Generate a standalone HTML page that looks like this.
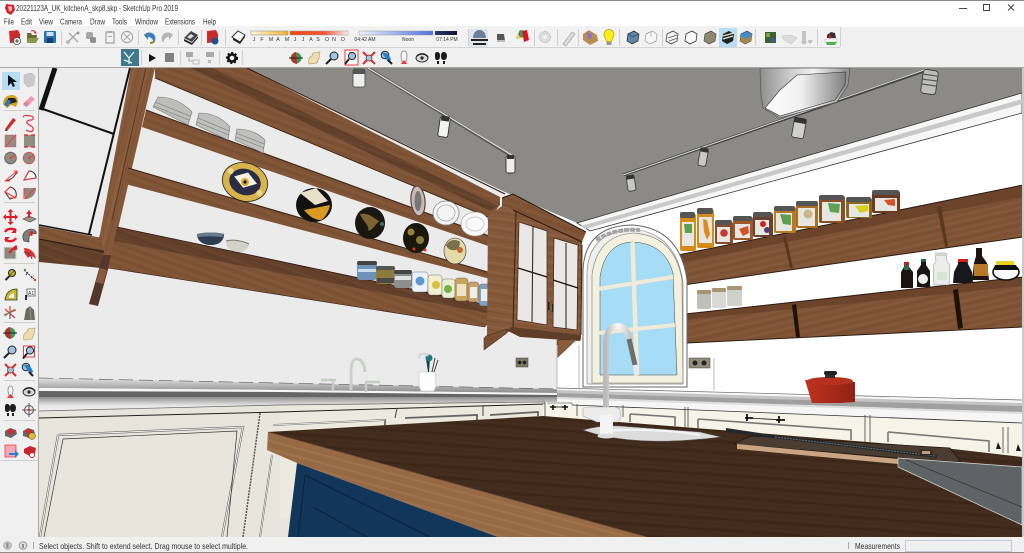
<!DOCTYPE html>
<html><head><meta charset="utf-8"><title>SketchUp</title>
<style>html,body{margin:0;padding:0;background:#f0f0f0;overflow:hidden}svg{display:block}
text{font-family:"Liberation Sans",sans-serif;fill:#333}</style></head>
<body>
<svg xmlns="http://www.w3.org/2000/svg" width="1024" height="553" viewBox="0 0 1024 553">
<defs>
<clipPath id="vp"><rect x="39" y="68" width="983" height="469"/></clipPath>
<pattern id="wl" width="70" height="14" patternUnits="userSpaceOnUse" patternTransform="rotate(20)">
<rect width="70" height="14" fill="#7e5335"/><rect y="2" width="70" height="2" fill="#83583a"/><rect y="6" width="70" height="1" fill="#774d30"/><rect y="9" width="70" height="3" fill="#825739"/><rect y="12" width="70" height="1" fill="#794f32"/></pattern>
<pattern id="wd" width="70" height="10" patternUnits="userSpaceOnUse" patternTransform="rotate(20)">
<rect width="70" height="10" fill="#63402a"/><rect y="3" width="70" height="2" fill="#69452e"/><rect y="7" width="70" height="1" fill="#5c3b26"/></pattern>
<pattern id="wr" width="70" height="13" patternUnits="userSpaceOnUse" patternTransform="rotate(-13)">
<rect width="70" height="13" fill="#7e5335"/><rect y="2" width="70" height="2" fill="#85593b"/><rect y="6" width="70" height="1" fill="#774d31"/><rect y="9" width="70" height="2" fill="#83573a"/></pattern>
<pattern id="wv" width="12" height="60" patternUnits="userSpaceOnUse" patternTransform="rotate(14)">
<rect width="12" height="60" fill="#85583a"/><rect x="2" width="2" height="60" fill="#8e6042"/><rect x="7" width="1" height="60" fill="#7a5034"/></pattern>
<pattern id="wc" width="60" height="9" patternUnits="userSpaceOnUse" patternTransform="rotate(8)">
<rect width="60" height="9" fill="#85583a"/><rect y="2" width="60" height="2" fill="#8d5f41"/><rect y="6" width="60" height="1" fill="#7b5135"/></pattern>
<pattern id="wt" width="90" height="11" patternUnits="userSpaceOnUse" patternTransform="rotate(4)">
<rect width="90" height="11" fill="#402a1c"/><rect y="1" width="90" height="2" fill="#462e1f"/><rect y="5" width="90" height="1" fill="#382415"/><rect y="8" width="90" height="2" fill="#452d1e"/></pattern>
<pattern id="wi" width="60" height="8" patternUnits="userSpaceOnUse" patternTransform="rotate(15)">
<rect width="60" height="8" fill="#976a46"/><rect y="3" width="60" height="2" fill="#9f714c"/></pattern>
<linearGradient id="hood" x1="0" x2="1" y1="0" y2="0"><stop offset="0" stop-color="#8e8e8e"/><stop offset=".35" stop-color="#cfcfcf"/><stop offset=".6" stop-color="#f2f2f2"/><stop offset="1" stop-color="#8c8c8c"/></linearGradient>
<linearGradient id="hood2" x1="0" x2="1" y1="0" y2="0"><stop offset="0" stop-color="#fff"/><stop offset=".45" stop-color="#f0f0f0"/><stop offset=".8" stop-color="#a8a8a8"/><stop offset="1" stop-color="#7e7e7e"/></linearGradient>
<linearGradient id="tap" x1="0" x2="1" y1="0" y2="0"><stop offset="0" stop-color="#bbb"/><stop offset=".5" stop-color="#fafafa"/><stop offset="1" stop-color="#c8c8c8"/></linearGradient>
<linearGradient id="potg" x1="0" x2="1" y1="0" y2="0"><stop offset="0" stop-color="#c2321f"/><stop offset="1" stop-color="#8f2214"/></linearGradient>
<linearGradient id="yb" x1="0" x2="1"><stop offset="0" stop-color="#fff6d8"/><stop offset="1" stop-color="#f2b32e"/></linearGradient>
<linearGradient id="rb" x1="0" x2="1"><stop offset="0" stop-color="#f2450d"/><stop offset=".6" stop-color="#f4553a"/><stop offset="1" stop-color="#fff0f0"/></linearGradient>
<linearGradient id="bb" x1="0" x2="1"><stop offset="0" stop-color="#eef2fb"/><stop offset="1" stop-color="#4f6fe0"/></linearGradient>
<linearGradient id="nb" x1="0" x2="1"><stop offset="0" stop-color="#2a3a78"/><stop offset="1" stop-color="#101428"/></linearGradient>
<linearGradient id="m1" x1="0" x2="0" y1="0" y2="1"><stop offset="0" stop-color="#e2e2e2"/><stop offset="1" stop-color="#8a8a8a"/></linearGradient>
<linearGradient id="m2" x1="0" x2="0" y1="0" y2="1"><stop offset="0" stop-color="#8e8e8e"/><stop offset=".6" stop-color="#e6e6e6"/><stop offset="1" stop-color="#f0f0f0"/></linearGradient>
</defs>

<!-- chrome -->
<rect width="1024" height="553" fill="#f0f0f0"/>
<rect width="1024" height="27" fill="#fff"/>
<rect width="1024" height="1" fill="#8c8c8c"/>
<rect y="26" width="840" height="21" fill="#f2f2f2"/>
<rect y="47" width="840" height="1" fill="#d4d4d4"/>
<rect y="67" width="1024" height="1" fill="#a9a9a9"/>

<!-- title -->
<path d="M6 4l8 1 1 5-4 5-4-2-2-5z" fill="#d8232a"/><path d="M8 6l4 .5v4l-3 1z" fill="#f7b5b5"/>
<text x="16" y="11" font-size="8.6" textLength="162" lengthAdjust="spacingAndGlyphs">20221123A_UK_kitchenA_skp8.skp - SketchUp Pro 2019</text>
<g font-size="8.4">
<text x="4" y="24.5" textLength="10" lengthAdjust="spacingAndGlyphs">File</text>
<text x="21" y="24.5" textLength="11" lengthAdjust="spacingAndGlyphs">Edit</text>
<text x="39" y="24.5" textLength="14" lengthAdjust="spacingAndGlyphs">View</text>
<text x="60" y="24.5" textLength="22" lengthAdjust="spacingAndGlyphs">Camera</text>
<text x="90" y="24.5" textLength="15" lengthAdjust="spacingAndGlyphs">Draw</text>
<text x="112" y="24.5" textLength="15" lengthAdjust="spacingAndGlyphs">Tools</text>
<text x="135" y="24.5" textLength="23" lengthAdjust="spacingAndGlyphs">Window</text>
<text x="165" y="24.5" textLength="30" lengthAdjust="spacingAndGlyphs">Extensions</text>
<text x="203" y="24.5" textLength="13" lengthAdjust="spacingAndGlyphs">Help</text>
</g>
<!-- window controls -->
<rect x="959" y="8" width="8" height="1" fill="#444"/>
<rect x="983.5" y="4.5" width="6" height="6" fill="none" stroke="#444"/>
<path d="M1008 4.5l6 6m0-6l-6 6" stroke="#444" fill="none"/>

<!-- dividers -->
<g fill="#cfcfcf">
<rect x="61" y="30" width="1" height="15"/><rect x="138" y="30" width="1" height="15"/><rect x="178" y="30" width="1" height="15"/><rect x="201" y="30" width="1" height="15"/><rect x="225" y="29" width="1" height="17"/><rect x="468" y="29" width="1" height="17"/><rect x="534" y="29" width="1" height="17"/><rect x="557" y="29" width="1" height="17"/><rect x="578" y="29" width="1" height="17"/><rect x="619" y="29" width="1" height="17"/><rect x="662" y="29" width="1" height="17"/><rect x="755" y="29" width="1" height="17"/><rect x="817" y="29" width="1" height="17"/><rect x="840" y="27" width="1" height="20"/>
<rect x="141" y="50" width="1" height="15"/><rect x="180" y="50" width="1" height="15"/><rect x="219" y="50" width="1" height="15"/><rect x="242" y="50" width="1" height="15"/>
<rect x="4" y="110" width="31" height="1"/><rect x="4" y="202" width="31" height="1"/><rect x="4" y="263" width="31" height="1"/><rect x="4" y="322" width="31" height="1"/><rect x="4" y="380" width="31" height="1"/><rect x="4" y="420" width="31" height="1"/><rect x="0" y="460" width="38" height="1"/>
</g>

<!-- row 1 icons -->
<path d="M9 31l9-1 2 4v8l-10 1z" fill="#d12a2a"/><circle cx="17" cy="41" r="3.6" fill="#fff" stroke="#333" stroke-width=".7"/><path d="M15 41h4m-2-2v4" stroke="#222" stroke-width=".8"/>
<path d="M27 33h4l1 2h5l-1 8H27z" fill="#6d6a35"/><path d="M28 38h11l-3 5H27z" fill="#8b9a4d"/><path d="M31 31c2-1 4 0 5 2l-2-.2" stroke="#c23" fill="none"/>
<rect x="44" y="31" width="12" height="12" rx="1" fill="#2b6fb0"/><rect x="46.5" y="32" width="7" height="4" fill="#cfe3f4"/><rect x="47" y="38" width="6" height="5" fill="#123f6f"/>
<path d="M68 42l9-9m-8 0l9 9" stroke="#aaa" stroke-width="1.4"/><circle cx="68" cy="42" r="2" fill="#bbb"/><circle cx="78" cy="33" r="1.5" fill="#999"/>
<rect x="86" y="32" width="7" height="7" rx="2" fill="#a8a8a8"/><rect x="90" y="37" width="6" height="6" rx="2" fill="#8f8f8f"/>
<rect x="106" y="32" width="8" height="11" fill="none" stroke="#aaa" stroke-width="1.4"/><rect x="108" y="31" width="4" height="2" fill="#aaa"/><rect x="108" y="36" width="4" height="1" fill="#aaa"/>
<circle cx="127" cy="37" r="5.6" fill="#f4f4f4" stroke="#aaa" stroke-width="1.2"/><path d="M124 34l6 6m0-6l-6 6" stroke="#aaa"/>
<path d="M144 35c3-4 9-3 11 1 1 3 0 5-1 7-1-4-3-6-6-6l0 3z" fill="#3e7fb5"/><path d="M150 43c2 0 4-1 4-2" stroke="#8a8840" stroke-width="2" fill="none"/>
<path d="M173 35c-3-4-9-3-11 1-1 3 0 5 1 7 1-4 3-6 6-6l0 3z" fill="#b5b5b5"/>
<path d="M184 38l7-7 7 4-6 7z" fill="#444"/><path d="M184 39l8 4 6-7v2l-6 7-8-4z" fill="#222"/><path d="M187 37l4-3 3 2-4 3z" fill="#ddd"/>
<path d="M207 31l9-1 2 4v8l-11 1z" fill="#c92a2a"/><circle cx="215" cy="41" r="3.5" fill="#1d4f91"/>
<path d="M232 37l6-6 7 4-5 7z" fill="#fff" stroke="#333"/><path d="M233 38l7 4 5-7v2l-5 7-7-4z" fill="#222"/>

<!-- shadow sliders -->
<rect x="251" y="31" width="37" height="4" fill="url(#yb)" stroke="#888" stroke-width=".5"/>
<rect x="290" y="31" width="58" height="4" fill="url(#rb)" stroke="#999" stroke-width=".5"/>
<rect x="359" y="31" width="74" height="4" fill="url(#bb)" stroke="#999" stroke-width=".5"/>
<rect x="435" y="31" width="22" height="4" fill="url(#nb)"/>
<g font-size="5.2" fill="#444" text-anchor="middle">
<text x="254" y="41">J</text><text x="262" y="41">F</text><text x="271" y="41">M</text><text x="278" y="41">A</text><text x="287" y="41">M</text><text x="295" y="41">J</text><text x="303" y="41">J</text><text x="311" y="41">A</text><text x="318" y="41">S</text><text x="327" y="41">O</text><text x="334" y="41">N</text><text x="343" y="41">D</text>
<text x="365" y="41" font-size="5">04:42 AM</text><text x="408" y="41" font-size="5">Noon</text><text x="447" y="41" font-size="5">07:14 PM</text>
</g>
<!-- right part row 1 -->
<rect x="469" y="29" width="19" height="18" fill="#e0e5ec"/>
<path d="M473 38c0-5 3-8 6.500-8s6.500 3 6.500 8z" fill="#6d7d9a"/><rect x="471" y="39" width="17" height="2" fill="#222"/><rect x="473" y="43" width="13" height="2" fill="#222"/>
<path d="M497 34h7l1 7h-8z" fill="#555"/><rect x="497" y="40" width="8" height="2" fill="#bbb"/>
<path d="M517 37l3-7 2 1-2 7z" fill="#34b"/><path d="M519 31l4-1 1 7-3 1z" fill="#3a4"/><path d="M522 31l5-1 2 10-5 2z" fill="#e0101f"/><path d="M516 39l2-6 3 5z" fill="#e9c14a"/>
<circle cx="545" cy="37" r="5.5" fill="#ddd" stroke="#bbb" stroke-dasharray="1.500 1"/><circle cx="545" cy="37" r="2" fill="#f3f3f3"/>
<path d="M563 44l9-12 3 2-9 12z" fill="#ddd" stroke="#aaa" stroke-width=".8"/>
<path d="M583 34l6-4 3 2 5 3 1 6-8 4-7-5z" fill="#b98c52"/><path d="M587 33l4 0 1 5-4 1z" fill="#8d6fc4"/>
<path d="M609 29.500c3 0 5 2 5 5 0 3-2 4-2.500 7h-5c-.5-3-2.500-4-2.500-7 0-3 2-5 5-5z" fill="#fbee1d" stroke="#b3a10f" stroke-width=".7"/><rect x="606.500" y="42" width="5" height="3" fill="#999"/>
<path d="M628 34l6-3 5 3-1 7-6 3-5-3z" fill="#5d88a8" stroke="#222" stroke-width=".7"/><path d="M628 34l5 3 5-3" fill="none" stroke="#234" stroke-width=".6"/>
<path d="M646 34l6-3 5 3-1 7-6 3-5-3z" fill="#f6f6f6" stroke="#999" stroke-width=".7"/><path d="M651 31v6" stroke="#bbb"/>
<path d="M667 34l6-3 5 3-1 7-6 3-5-3z" fill="#f2f2f2" stroke="#444" stroke-width=".8"/><path d="M668 38l9-3m-8 6l9-3" stroke="#555" stroke-width=".7"/>
<path d="M686 34l6-3 5 3-1 7-6 3-5-3z" fill="#fafafa" stroke="#333" stroke-width=".8"/>
<path d="M705 34l6-3 5 3-1 7-6 3-5-3z" fill="#8e8a72" stroke="#444" stroke-width=".7"/>
<rect x="719" y="28" width="18" height="19" fill="#b9dcf5"/><path d="M723 34l6-3 5 3-1 7-6 3-5-3z" fill="#222"/><path d="M723 36l11-3m-11 6l10-3" stroke="#e6e2c9" stroke-width="1.3"/>
<path d="M741 34l6-3 5 3-1 7-6 3-5-3z" fill="#3f8fd0" stroke="#333" stroke-width=".6"/><path d="M741 36l6 3 5-5-1 7-6 3-5-3z" fill="#a8864f"/>
<rect x="765" y="32" width="11" height="11" fill="#3f5f30"/><rect x="766" y="33" width="4" height="4" fill="#7d9e4a"/><rect x="771" y="38" width="4" height="4" fill="#2a64a0"/>
<path d="M782 36l9-1 6 3-6 6-7-4z" fill="#ddd" stroke="#c6c6c6" stroke-width=".6"/>
<path d="M802 31h4v9h-4zM808 34v6h5l-2.500 4-2.500-2z" fill="#c4c4c4"/><circle cx="804" cy="42" r="2.500" fill="#c4c4c4"/>
<path d="M827 35l4-3 4 1 1 5-9 0z" fill="#333"/><path d="M825 39h12v3h-12z" fill="#fff" stroke="#aaa" stroke-width=".5"/><path d="M826 42h11l-2 3h-8z" fill="#4caf50"/><circle cx="830" cy="37" r="1.500" fill="#c22"/>

<!-- row 2 icons -->
<rect x="121" y="49" width="18" height="17" fill="#3e7a8c"/><path d="M124 52l5 6 5-6M129 58v6M124 60l8 3" stroke="#e8eef0" stroke-width="1.300" fill="none"/>
<path d="M149 54l7 4-7 4z" fill="#111"/>
<rect x="165" y="53" width="9" height="9" fill="#808080"/>
<rect x="186" y="52" width="7" height="5" fill="#aaa"/><rect x="193" y="60" width="6" height="4" fill="none" stroke="#bbb"/><path d="M189 57v4h4" stroke="#aaa" fill="none"/>
<rect x="206" y="52" width="8" height="5" fill="#aaa"/><path d="M208 60l3 3m0-3l-3 3" stroke="#aaa"/>
<circle cx="232" cy="58" r="3.600" fill="none" stroke="#111" stroke-width="2.600"/><circle cx="232" cy="58" r="5.300" fill="none" stroke="#111" stroke-width="1.600" stroke-dasharray="2 2"/>

<g>
<circle cx="296" cy="58" r="5.500" fill="#3d9b58"/><path d="M291 58c2-4 3-6 5-6l1 12c-3 0-5-3-6-6z" fill="#c62828"/><path d="M289 58h14" stroke="#222"/>
<path d="M309 64c-1-4 0-7 3-8l1-3 7-1-1 6-2 5z" fill="#efdcb0" stroke="#b9a678" stroke-width=".7"/>
<circle cx="334" cy="56" r="4" fill="#a4c3de" stroke="#222"/><path d="M331 59l-5 5" stroke="#222" stroke-width="2"/>
<rect x="345" y="50" width="13" height="15" fill="#fff" stroke="#ea3a3a"/><circle cx="352" cy="56" r="3.600" fill="#a4c3de" stroke="#222"/><path d="M349 59l-4 5" stroke="#222" stroke-width="2"/>
<circle cx="369" cy="58" r="3" fill="#a4c3de" stroke="#333" stroke-width=".7"/><path d="M363 52l4 4M375 52l-4 4M363 64l4-4M375 64l-4-4" stroke="#dc2b2b" stroke-width="2"/>
<circle cx="385" cy="55" r="3.800" fill="#9dc1de" stroke="#222"/><path d="M382 53c4-1 8 2 9 7l-3 2z" fill="#2b7fc4"/><path d="M388 60l4 4" stroke="#222" stroke-width="2"/>
<path d="M404 51c2 0 3 2 3 5l-1 6h-4l-1-6c0-3 1-5 3-5z" fill="#f6f6f6" stroke="#999"/><path d="M401 64h6l-3-4z" fill="#e33"/>
<ellipse cx="422" cy="58" rx="6" ry="4" fill="#d9d9d9" stroke="#333"/><path d="M417 56c3-3 8-3 11 1" stroke="#222" stroke-width="1.500" fill="none"/><circle cx="422" cy="58" r="1.600" fill="#222"/>
<path d="M437 52c2 0 3 1 3 4s-1 4-3 4-2-2-2-4 0-4 2-4zm0 9h2v3h-2zM444 52c2 0 3 2 3 4s-1 4-3 4-3-1-3-4 1-4 3-4zm-1 9h2v3h-2z" fill="#1d1d1d"/>
</g>

<!-- left toolbar -->
<rect x="2" y="72" width="18" height="18" fill="#b9dcf5"/><path d="M8 75v11l3-3 2 4 2-1-2-4h4z" fill="#111"/>
<path d="M24 75l7-2 4 3-1 9-6 2-4-4z" fill="#c9c9c9" stroke="#bbb" stroke-width=".6"/>
<path d="M3 104c0-6 4-9 9-9 4 0 6 3 6 7l-2 5-5-2-4 3z" fill="#d2a423"/><path d="M8 98l7 0 2 4-8 2z" fill="#222"/><path d="M4 105l3-6 4 2-3 6z" fill="#3a74b0"/>
<path d="M23 104l8-8 4 3-8 8z" fill="#f39ab0"/><path d="M23 104l3 3 3-3-3-3z" fill="#dd7d98"/>
<path d="M5 129l8-11 3 2-9 11z" fill="#c83030"/><path d="M6 129l-1 2 2 0z" fill="#222"/>
<path d="M23 117c2-3 5-1 8-1s3 4 0 4-6 2-3 4 6 3 5 6-5 1-7 0" fill="none" stroke="#e63946" stroke-width="1.300"/>
<rect x="5" y="135" width="11" height="12" fill="#908e83" stroke="#e46" stroke-width=".4"/><path d="M5 147l11-12" stroke="#f33" stroke-width="1"/>
<rect x="24" y="135" width="11" height="12" fill="#908e83"/><path d="M24 135h4M31 135h4M24 147h4M31 147h4" stroke="#e33" stroke-width="1.400"/>
<circle cx="10.500" cy="158" r="5.800" fill="#8f8c80" stroke="#666"/><circle cx="10.500" cy="158" r="1" fill="#e33"/><path d="M11 158l4-3" stroke="#e33"/>
<circle cx="29" cy="158" r="5.800" fill="#8f8c80" stroke="#e33" stroke-width=".7"/><circle cx="29" cy="158" r="1" fill="#e33"/><path d="M29 158l5-3" stroke="#e33"/>
<path d="M5 181c6-1 10-4 12-10" stroke="#333" fill="none"/><path d="M5 181l12-10M5 181h5M14 171h3v3" stroke="#f33" fill="none"/>
<path d="M24 180l5-9c4 0 7 3 7 7z" fill="#f6f6f6" stroke="#333"/><path d="M24 180l5-9M24 180l12-2" stroke="#e33"/>
<path d="M5 192l5-5c5 1 7 5 6 10l-6 2z" fill="none" stroke="#333"/><path d="M5 192l11 6M10 187l-5 5M10 198h5" stroke="#f33" fill="none"/>
<path d="M24 188h12c0 6-4 11-11 11z" fill="#8c8a7f"/><path d="M24 188v11M25 199l10-11" stroke="#f33"/>
<path d="M10.500 211v12M4.500 217h12" stroke="#e11d2a" stroke-width="2"/><path d="M10.500 209l-3 3h6zM10.500 225l-3-3h6zM3 217l3-3v6zM18 217l-3-3v6z" fill="#e11d2a"/>
<path d="M23 219l6-3 7 3-6 3z" fill="#9a9683" stroke="#444" stroke-width=".6"/><path d="M29 218v-4" stroke="#e11d2a" stroke-width="2"/><path d="M26 214l3-4 3 4z" fill="#e11d2a"/>
<path d="M5 232c2-4 9-4 11-1M16 238c-2 4-9 4-11 1" stroke="#e11d2a" stroke-width="2.400" fill="none"/><path d="M16 228v5h-5zM5 242v-5h5z" fill="#e11d2a"/>
<path d="M24 241c-3-6 0-11 7-12 4 0 6 3 5 5-3-1-6 0-7 3l0 5z" fill="#7f7f7f" stroke="#333" stroke-width=".6"/><path d="M30 231l4 1-2 4-3-1z" fill="#d82a2a"/>
<rect x="4" y="247" width="12" height="12" fill="#8c8a7f" stroke="#ddd"/><path d="M9 253l7-7" stroke="#e11d2a" stroke-width="2"/><path d="M17 245v5h-5z" fill="#e11d2a"/>
<path d="M24 248c6 0 11 4 12 11-3-3-6-4-8-1l-3-4z" fill="#e83232"/><path d="M24 252c4 0 7 3 8 7" stroke="#444" fill="none"/>
<circle cx="12" cy="273" r="3.500" fill="#c7b324" stroke="#222"/><path d="M9.500 276l-4 4" stroke="#222" stroke-width="2"/><path d="M5 280l10-10" stroke="#444" stroke-width=".7"/>
<path d="M24 270l10 9M26 275l2-3M31 278l3-2" stroke="#333" stroke-dasharray="2 1"/><circle cx="25" cy="270" r="1.200" fill="#3a3"/><circle cx="35" cy="280" r="1.200" fill="#e33"/>
<path d="M5 300c1-8 6-11 12-11v11z" fill="#c7ba30" stroke="#333" stroke-width=".8"/><path d="M9 298c0-3 2-4 5-5v5z" fill="#f3f3f3"/>
<rect x="27" y="289" width="8" height="7" fill="#fff" stroke="#777"/><text x="28" y="295" font-size="5" fill="#333">A1</text><rect x="25" y="295" width="2" height="5" fill="#333"/>
<path d="M10 306v13M4 315l12-5M5 309l10 9" stroke="#e33" stroke-width="1.200"/><path d="M10 312l5-3M10 312l-5 4" stroke="#3a3"/><path d="M10 312v7" stroke="#36c"/>
<path d="M24 320l2-11 4-3 4 4 1 10z" fill="#6c6c62"/><path d="M30 306l1 14" stroke="#999"/>
<circle cx="10" cy="333" r="5.500" fill="#3d9b58"/><path d="M5 333c1-4 3-6 5-6l1 12c-3 0-5-3-6-6z" fill="#c62828"/><path d="M3 333h14" stroke="#222"/>
<path d="M24 340c-1-4 0-7 3-8l1-3 7-1-1 6-2 5z" fill="#efdcb0" stroke="#b9a678" stroke-width=".7"/>
<circle cx="12" cy="350" r="4" fill="#a4c3de" stroke="#222"/><path d="M9 353l-5 5" stroke="#222" stroke-width="2"/>
<rect x="23.500" y="346" width="11" height="11" fill="#fff" stroke="#ea3a3a"/><circle cx="30" cy="350.500" r="3.600" fill="#a4c3de" stroke="#222"/><path d="M27 353.500l-4 5" stroke="#222" stroke-width="2"/>
<circle cx="10.500" cy="370" r="3" fill="#a4c3de" stroke="#333" stroke-width=".7"/><path d="M5 364l4 4M16 364l-4 4M5 376l4-4M16 376l-4-4" stroke="#dc2b2b" stroke-width="2"/>
<circle cx="26" cy="367" r="3.800" fill="#9dc1de" stroke="#222"/><path d="M24 365c4-1 8 2 9 7l-3 2z" fill="#2b7fc4"/><path d="M29 372l4 4" stroke="#222" stroke-width="2"/>
<path d="M10.500 386c2 0 2.500 2 2.500 5l-1 5h-3l-1-5c0-3 .5-5 2.500-5z" fill="#f6f6f6" stroke="#999"/><path d="M7 398h7l-3.500-4z" fill="#e33"/>
<ellipse cx="29" cy="392" rx="6" ry="4" fill="#d9d9d9" stroke="#333"/><path d="M24 390c3-3 8-3 11 1" stroke="#222" stroke-width="1.500" fill="none"/><circle cx="29" cy="392" r="1.600" fill="#222"/>
<path d="M7 404c2 0 3 1 3 4s-1 4-3 4-2-2-2-4 0-4 2-4zm0 9h2v3h-2zM13 404c2 0 3 2 3 4s-1 4-3 4-3-1-3-4 1-4 3-4zm-1 9h2v3h-2z" fill="#1d1d1d"/>
<circle cx="29" cy="410" r="4.500" fill="none" stroke="#555"/><path d="M22 410h14M29 403v14" stroke="#555"/><circle cx="29" cy="410" r="1.400" fill="#c44"/>
<path d="M5 431l5-3 6 2 1 4-6 4-6-2z" fill="#666"/><path d="M7 430l5-1 3 3-5 3z" fill="#d62b2b"/>
<path d="M23 431l5-3 6 2 1 4-6 4-6-2z" fill="#666"/><path d="M25 430l5-1 3 3-5 3z" fill="#d62b2b"/><circle cx="32" cy="436" r="3.400" fill="#e8b92e" stroke="#333" stroke-width=".5"/>
<rect x="5" y="445" width="11" height="12" fill="#f4a8b4" stroke="#d33" stroke-width=".7"/><path d="M9 453h6v-3l4 4-4 4v-3H9z" fill="#2a7fd0"/>
<path d="M24 449l6-3 6 2-1 5-5 3-6-3z" fill="#c8242a"/><circle cx="32" cy="455" r="2.500" fill="#fff" stroke="#c22"/>

<!-- viewport -->
<rect x="38" y="67" width="1" height="470" fill="#a9a9a9"/>
<g clip-path="url(#vp)">
<rect x="39" y="68" width="983" height="469" fill="#fff"/>
<rect x="39" y="68" width="518" height="330" fill="#ebebeb"/>
<polygon points="245,68 1022,68 1022,93 577,223 505,192" fill="#8b8a86"/>
<polygon points="577,223 1022,93 1022,113 590,231" fill="#f7f7f7" stroke="#333" stroke-width=".8"/>
<polygon points="581,226 1022,99 1022,104 585,229" fill="#c9c9c9"/>

<!-- left panel glass -->
<polygon points="55,68 130,68 115,133 45,108" fill="#ececec"/>
<polygon points="39,112 112,137 90,233 39,224" fill="#ededed"/>
<path d="M55 68L41 110" stroke="#111" stroke-width="5"/>
<path d="M43 109L114 134" stroke="#111" stroke-width="2"/>
<path d="M130 68L89 234" stroke="#111" stroke-width="2"/>
<path d="M39 225L92 235" stroke="#111" stroke-width="1.500"/>

<!-- post -->
<polygon points="131,68 155,68 112,255 103,255 96,248 100,234" fill="url(#wv)"/>
<path d="M146 68L112 220" stroke="#5a3820" stroke-width="1"/>
<polygon points="39,226 102,238 103,250 39,238" fill="url(#wl)"/>
<polygon points="39,238 104,250 101,268 39,262" fill="url(#wd)"/>
<path d="M39 239L104 252" stroke="#2a1a10" stroke-width="1"/>
<polygon points="103,255 112,255 98,306 89,304" fill="#54362a"/>
<path d="M100 268l7 2-4 14-7-2z" fill="#8a5a3a"/>

<!-- fascia top -->
<polygon points="155,68 247,68 500,197 500,205 490,218 155,78" fill="url(#wl)"/>
<polygon points="190,68 212,68 498,206 490,211" fill="url(#wd)"/>
<path d="M247 68L505 194" stroke="#2e1b10" stroke-width="1"/>
<path d="M155 78L490 218" stroke="#2e1b10" stroke-width=".8"/>

<!-- shelves -->
<polygon points="146,110 500,240 500,250 142,127" fill="url(#wl)"/>
<path d="M146 110L500 240" stroke="#3a2415" stroke-width="1"/>
<polygon points="128,168 498,275 498,281 125,184" fill="url(#wl)"/>
<path d="M128 168L498 275" stroke="#3a2415" stroke-width="1"/>
<polygon points="117,227 497,307 497,316 485,327 108,268" fill="url(#wl)"/>
<polygon points="117,227 497,307 497,315 114,241" fill="url(#wd)"/>
<path d="M117 227L497 307" stroke="#2e1b10" stroke-width=".8"/>
<path d="M108 268L485 327" stroke="#2e1b10" stroke-width=".6"/>

<!-- stacks of plates -->
<g stroke="#777" stroke-width=".6">
<path d="M153 107L158 97Q178 97 192 112L188 125Z" fill="#bdbdbb"/><path d="M155 102L190 116M154 106L189 120" fill="none"/>
<path d="M196 125L199 113Q218 113 230 127L228 140Z" fill="#c0c0be"/><path d="M198 118L229 131M197 122L229 135" fill="none"/>
<path d="M235 140L237 129Q254 129 265 140L263 153Z" fill="#c0c0be"/><path d="M236 133L264 144M236 137L264 148" fill="none"/>
</g>
<!-- plates -->
<g transform="rotate(18 245 182)"><ellipse cx="245" cy="182" rx="23" ry="19" fill="#d8b24a" stroke="#222" stroke-width=".8"/><ellipse cx="245" cy="182" rx="16" ry="13" fill="#2a2c45"/><path d="M233 180l12-8 12 8-12 8z" fill="#f4f0df"/><circle cx="228" cy="176" r="3" fill="#f0d98a"/><circle cx="262" cy="188" r="3" fill="#f0d98a"/><circle cx="245" cy="182" r="4" fill="#d9a92f"/><circle cx="245" cy="182" r="1.600" fill="#111"/></g>
<ellipse cx="314" cy="205" rx="18" ry="17" fill="#111"/><path d="M300 193l16-5 12 13-13 4z" fill="#e9e0ca"/><path d="M304 210l26-5c-1 6-5 13-9 15-7 0-12-4-17-10z" fill="#d99a23"/>
<ellipse cx="370" cy="223" rx="15" ry="16" fill="#1a1712"/><path d="M360 214c8-2 14 4 20 8-2-3-8 11-12 8 2-4-6-10-8-16z" fill="#7d6232"/><circle cx="382" cy="224" r="2" fill="#3b6f6f"/>
<ellipse cx="416" cy="238" rx="13" ry="15" fill="#1a170f"/><circle cx="411" cy="232" r="3.500" fill="#9a8136"/><circle cx="420" cy="240" r="4" fill="#8a7a3a"/><circle cx="414" cy="249" r="1.500" fill="#e0341a"/><circle cx="425" cy="250" r="1.500" fill="#e0341a"/>
<ellipse cx="455" cy="251" rx="11" ry="13" fill="#e4d9aa" stroke="#333" stroke-width=".6"/><path d="M446 245c4-6 10-6 14-3l-1 7c-4 2-11 2-13-4z" fill="#4a4520" opacity=".7"/><circle cx="460" cy="250" r="3" fill="#c46a2a"/>
<ellipse cx="418" cy="201" rx="7" ry="15" fill="#c5bcb8" stroke="#6b3a3a" stroke-width="1.200" transform="rotate(-5 418 201)"/><ellipse cx="418" cy="201" rx="3.500" ry="10" fill="#777"/>
<ellipse cx="446" cy="213" rx="13" ry="12" fill="#f4f4f4" stroke="#888" stroke-width=".8"/><ellipse cx="446" cy="213" rx="9" ry="8" fill="none" stroke="#aaa" stroke-width=".8"/>
<ellipse cx="475" cy="224" rx="14" ry="12" fill="#fafafa" stroke="#999" stroke-width=".6"/><ellipse cx="475" cy="224" rx="9" ry="7" fill="none" stroke="#ccc"/>
<!-- bowls -->
<path d="M197 234c8-2 20-2 27 0 0 7-5 11-13 11-8 0-14-4-14-11z" fill="#2d3c52"/><path d="M197 234c8-2 20-2 27 0l-2 3c-8-1-16-1-24 0z" fill="#6a7b90"/>
<path d="M226 241c7-2 17 0 23 3-1 5-4 8-10 8-7 0-13-4-13-11z" fill="#d3d2c8"/><path d="M226 241c7-2 17 0 23 3" stroke="#777" fill="none"/>
<!-- cans -->
<rect x="357" y="262" width="20" height="18" rx="3" fill="#6f93b8"/><rect x="357" y="261" width="20" height="4" rx="2" fill="#444"/><rect x="358" y="269" width="18" height="3" fill="#cde"/>
<rect x="376" y="267" width="19" height="17" rx="3" fill="#8c7b3a"/><rect x="376" y="266" width="19" height="4" rx="2" fill="#555"/><rect x="377" y="278" width="17" height="5" fill="#4a4a4a"/>
<rect x="394" y="271" width="18" height="17" rx="3" fill="#8d8d8d"/><rect x="394" y="270" width="18" height="4" rx="2" fill="#444"/><rect x="395" y="276" width="16" height="4" fill="#e1e1e1"/>
<rect x="412" y="272" width="16" height="20" rx="3" fill="#edf2fa" stroke="#555" stroke-width=".4"/><circle cx="420" cy="281" r="4.500" fill="#5b9bd5"/>
<rect x="428" y="275" width="14" height="20" rx="3" fill="#f3efd2" stroke="#555" stroke-width=".4"/><circle cx="436" cy="285" r="4" fill="#d8c23c"/>
<rect x="442" y="279" width="13" height="19" rx="3" fill="#e8efd4" stroke="#555" stroke-width=".4"/><circle cx="448" cy="289" r="4" fill="#7ab043"/>
<rect x="455" y="278" width="13" height="23" rx="3" fill="#c9a45d" stroke="#555" stroke-width=".4"/><rect x="457" y="284" width="9" height="12" fill="#eee3c8"/>
<rect x="468" y="282" width="11" height="20" rx="3" fill="#c7a06a" stroke="#555" stroke-width=".4"/><rect x="470" y="287" width="7" height="11" fill="#eee"/>
<rect x="479" y="284" width="11" height="22" rx="3" fill="#7fa2c2" stroke="#555" stroke-width=".4"/><rect x="481" y="289" width="7" height="12" fill="#eaeef2"/>

<!-- track left -->
<path d="M368 68L515 158" stroke="#555" stroke-width="3"/><path d="M368 68L515 157" stroke="#ddd" stroke-width="1.200"/>
<rect x="353" y="69" width="12" height="18" rx="2" fill="#ededed" stroke="#444" stroke-width=".8"/><rect x="353" y="69" width="12" height="5" fill="#555"/>
<rect x="439" y="117" width="10" height="20" rx="2" fill="#f3f3f3" stroke="#333" stroke-width=".9" transform="rotate(8 444 127)"/><rect x="440" y="116" width="8" height="5" fill="#333" transform="rotate(8 444 127)"/>
<rect x="506" y="156" width="9" height="17" rx="2" fill="#ededed" stroke="#333" stroke-width=".9"/><rect x="507" y="155" width="7" height="4" fill="#333"/>

<!-- track right -->
<path d="M623 175L927 70" stroke="#444" stroke-width="3"/><path d="M623 175L927 69" stroke="#ddd" stroke-width="1"/>
<g transform="rotate(-8 631 183)"><rect x="627" y="176" width="8" height="15" rx="2" fill="#c8c8c8" stroke="#333" stroke-width=".8"/><rect x="627" y="175" width="8" height="4" fill="#333"/></g>
<g transform="rotate(10 703 158)"><rect x="699" y="148" width="8" height="18" rx="2" fill="#c8c8c8" stroke="#333" stroke-width=".8"/><rect x="699" y="148" width="8" height="4" fill="#333"/></g>
<g transform="rotate(10 799 128)"><rect x="793" y="118" width="12" height="20" rx="2" fill="#cfcfcf" stroke="#333" stroke-width=".8"/><rect x="793" y="118" width="12" height="5" fill="#333"/></g>
<g transform="rotate(8 929 82)"><rect x="922" y="70" width="15" height="24" rx="3" fill="#bdbdbd" stroke="#333" stroke-width=".8"/><path d="M922 75h15M922 80h15M922 85h15" stroke="#555" stroke-width="1.200"/></g>
<!-- hood -->
<polygon points="760,68 850,68 848,85 837,102 780,118 763,108 761,96" fill="url(#hood)" stroke="#555" stroke-width=".7"/>
<polygon points="765,108 780,90 797,75 846,72 845,85 835,100 780,116" fill="url(#hood2)" stroke="#333" stroke-width=".6"/>

<!-- right shelf upper -->
<polygon points="673,256 1023,185 1023,237 683,285" fill="url(#wr)"/>
<polygon points="673,256 1023,185 1023,197 682,262" fill="#6b442b"/>
<path d="M673 256L1023 185M683 285L1023 237" stroke="#2e1b10" stroke-width="1"/>
<polygon points="783,237 786,236 793,268 790,268" fill="#5a3820"/><polygon points="937,207 941,206 948,246 945,247" fill="#5a3820"/>
<path d="M673 256l10 29 0-25z" fill="#55361f"/>

<!-- jars upper -->
<g>
<rect x="680" y="214" width="16" height="37" rx="2" fill="#d58a1c"/><rect x="680" y="212" width="15" height="6" rx="2" fill="#555"/><rect x="682" y="222" width="12" height="24" fill="#e6e6e2"/><path d="M684 224h8v9h-7z" fill="#5d9f4c"/>
<rect x="697" y="210" width="17" height="38" rx="2" fill="#d58a1c"/><rect x="697" y="208" width="16" height="6" rx="2" fill="#555"/><rect x="699" y="217" width="13" height="26" fill="#e6e6e2"/><path d="M703 219l4 1 3 14-3 6-3-8z" fill="#e28a1f"/>
<rect x="715" y="222" width="18" height="22" rx="2" fill="#8c4b2a"/><rect x="715" y="220" width="17" height="5" rx="2" fill="#555"/><rect x="717" y="227" width="13" height="15" fill="#e6e6e2"/><circle cx="724" cy="233" r="3.800" fill="#c63a2a"/>
<rect x="733" y="217" width="20" height="23" rx="2" fill="#a05a28"/><rect x="733" y="216" width="19" height="5" rx="2" fill="#555"/><rect x="735" y="224" width="15" height="14" fill="#e6e6e2"/><path d="M739 229l9-3 1 7-6 3z" fill="#d5512a"/>
<rect x="753" y="213" width="20" height="24" rx="2" fill="#6a4030"/><rect x="753" y="212" width="19" height="5" rx="2" fill="#555"/><rect x="755" y="220" width="14" height="15" fill="#e6e6e2"/><circle cx="763" cy="224" r="3" fill="#c22"/><circle cx="767" cy="230" r="3" fill="#5a3b6e"/>
<rect x="774" y="207" width="22" height="26" rx="2" fill="#b87a24"/><rect x="774" y="206" width="21" height="5" rx="2" fill="#555"/><rect x="776" y="213" width="16" height="18" fill="#e6e6e2"/><path d="M780 214l11 1 0 10-8-1z" fill="#5f9e4c"/>
<rect x="796" y="202" width="22" height="26" rx="2" fill="#a96f22"/><rect x="796" y="201" width="22" height="5" rx="2" fill="#555"/><rect x="798" y="208" width="17" height="18" fill="#e6e6e2"/><circle cx="808" cy="214" r="4.500" fill="#c9b68a"/>
<rect x="819" y="196" width="26" height="27" rx="2" fill="#8b4f25"/><rect x="819" y="195" width="25" height="5" rx="2" fill="#555"/><rect x="822" y="202" width="19" height="19" fill="#e6e6e2"/><path d="M828 203l12 1-1 9-9-1z" fill="#5fa05a"/>
<rect x="846" y="198" width="26" height="20" rx="2" fill="#8a6a22"/><rect x="846" y="197" width="25" height="5" rx="2" fill="#555"/><rect x="849" y="204" width="20" height="13" fill="#e6e6e2"/><path d="M855 206l13-1 0 6-8 2z" fill="#d9cf1f"/>
<rect x="872" y="191" width="28" height="22" rx="2" fill="#6b3a22"/><rect x="872" y="190" width="27" height="5" rx="2" fill="#555"/><rect x="875" y="198" width="22" height="13" fill="#e6e6e2"/><path d="M884 200l11 -1 0 7-7-1z" fill="#d5512a"/>
</g>

<!-- right shelf lower -->
<polygon points="676,315 1023,277 1023,327 686,343" fill="url(#wr)"/>
<polygon points="676,315 1023,277 1023,286 685,320" fill="#6b442b"/>
<path d="M676 315L1023 277M686 343L1023 327" stroke="#2e1b10" stroke-width="1"/>
<polygon points="676,316 686,343 685,320" fill="#2a1a10"/>
<polygon points="792,305 796,304 800,337 796,337" fill="#1d1208"/><polygon points="953,290 958,289 963,328 958,329" fill="#1d1208"/>
<rect x="697" y="292" width="14" height="17" rx="1.500" fill="#c0bfb9"/><rect x="697" y="290" width="14" height="4" rx="1" fill="#a89572"/>
<rect x="712" y="290" width="14" height="18" rx="1.500" fill="#d8d8d4"/><rect x="712" y="288" width="14" height="4" rx="1" fill="#a89572"/>
<rect x="727" y="288" width="15" height="18" rx="1.500" fill="#d0d0cc"/><rect x="727" y="286" width="15" height="4" rx="1" fill="#a89572"/>
<!-- bottles -->
<path d="M904 262h5v5l4 5v16h-12v-16l3-5z" fill="#1b1212"/><rect x="904" y="262" width="5" height="3" fill="#c01f1f"/><rect x="904" y="265" width="5" height="5" fill="#2d6a3f"/>
<path d="M921 259h5v6l4 6v16h-13v-16l4-6z" fill="#181414"/><rect x="921" y="259" width="5" height="3" fill="#1f6a38"/><ellipse cx="923" cy="279" rx="5" ry="5" fill="#eee"/>
<path d="M935 253h11l1 8 3 5 -1 19h-15l-1-19 3-5z" fill="#ececea" stroke="#888" stroke-width=".5"/><rect x="937" y="272" width="10" height="8" fill="#d8e4d4"/><rect x="935" y="253" width="11" height="3" fill="#cfd3c9"/>
<path d="M958 259h9l1 5 4 8 1 11h-20l1-11 4-8z" fill="#17171c"/><rect x="958" y="259" width="10" height="3" fill="#d6201a"/>
<path d="M976 248h6v8l5 7 2 17h-17l2-17 2-7z" fill="#1b1410"/><rect x="974" y="264" width="14" height="12" fill="#b87a2a"/>
<ellipse cx="1006" cy="272" rx="13" ry="8" fill="#fafafa" stroke="#111" stroke-width="1.600"/><rect x="996" y="261" width="18" height="4" rx="1" fill="#e9d21f"/><path d="M995 265h21l2 5H993z" fill="#111"/>

<!-- cabinet -->
<polygon points="488,216 502,206 513,210 515,330 505,333 487,336" fill="url(#wc)"/>
<polygon points="486,336 507,329 507,333 484,350 484,338" fill="#7a5032" stroke="#3a2415" stroke-width=".5"/>
<polygon points="513,210 582,242 581,340 510,327" fill="url(#wc)"/>
<polygon points="502,198 513,194 586,232 582,242 513,210 502,206" fill="url(#wl)"/>
<path d="M502 198L513 194L586 232" stroke="#2a1a10" stroke-width="1" fill="none"/>
<path d="M513 210L582 242" stroke="#2a1a10" stroke-width="1"/>
<polygon points="506,330 512,327 581,335 580,341 520,337" fill="#5f3d26"/>
<polygon points="557,340 577,339 557,358" fill="#8a5c3b" stroke="#3a2415" stroke-width=".5"/>
<path d="M516 211L513 327M582 245L581 335" stroke="#3a2415"/>
<polygon points="519,222 547,231 547,325 517,320" fill="#e9e8e6" stroke="#3a2415" stroke-width=".7"/>
<polygon points="554,238 578,245 577,330 553,327" fill="#e9e8e6" stroke="#3a2415" stroke-width=".7"/>
<path d="M533 226L532 322M566 243L566 329" stroke="#2a1a10" stroke-width="1"/>
<path d="M518 268L547 277M553 280L578 288" stroke="#1c100a" stroke-width="1.400"/>
<rect x="548" y="302" width="1.500" height="8" fill="#222"/><rect x="552" y="304" width="1.500" height="8" fill="#222"/>

<!-- outlets -->
<rect x="516" y="358" width="12" height="9" fill="#7d7765" stroke="#444" stroke-width=".5"/><circle cx="519.500" cy="362.500" r="1.800" fill="#222"/><circle cx="524.500" cy="362.500" r="1.800" fill="#222"/>
<rect x="689" y="358" width="21" height="10" fill="#908b7a" stroke="#444" stroke-width=".5"/><circle cx="695" cy="363" r="2.500" fill="#222"/><circle cx="704" cy="363" r="2.500" fill="#222"/>
<path d="M557 345V392M714 358V390M579 345V392" stroke="#bbb" stroke-width="1"/>

<!-- window -->
<path d="M583 387V270Q585 226 632 225Q680 228 687 280V387Z" fill="#fff" stroke="#666" stroke-width="1"/>
<path d="M587 384V272Q589 232 632 229Q676 233 683 282V384Z" fill="#efefed" stroke="#888" stroke-width=".7"/>
<path d="M592 383V275Q597 235 634 233Q675 236 682 280L683 383Z" fill="#f5f1df" stroke="#777" stroke-width=".6"/>
<path d="M600 375V277Q605 243 632 242Q665 243 673 273L677 375Z" fill="#a6dcf5" stroke="#444" stroke-width=".5"/>
<path d="M632.500 242L637 375" stroke="#f0ebd8" stroke-width="4.500"/>
<path d="M598 289L673 277M598 333L675 325" stroke="#f0ebd8" stroke-width="4"/>
<path d="M596 240Q615 228 640 230" stroke="#a5a5a5" stroke-width="4" fill="none" stroke-dasharray="5 1"/>

<!-- moulding left -->
<polygon points="39,378 279,383 557,389 557,393 279,390 39,388" fill="url(#m1)"/>
<polygon points="39,388 279,390 557,393 557,395 279,392 39,391" fill="#f6f6f6"/>
<polygon points="39,391 279,392 557,395 557,397 279,397 39,397" fill="#666"/>
<polygon points="39,397 279,397 557,397 557,402 279,405 39,411" fill="url(#m2)"/>
<path d="M39 378L279 383L557 389" fill="none" stroke="#666" stroke-width=".7" stroke-dasharray="14 6"/>
<!-- moulding right -->
<polygon points="557,388 1022,400 1022,423 557,403" fill="#f6f6f6"/>
<polygon points="557,390 1022,403 1022,406 557,393" fill="#c4c4c4"/>
<polygon points="557,393 1022,406 1022,412 557,397" fill="#a0a0a0"/>
<polygon points="557,397 1022,412 1022,414 557,399" fill="#dedede"/>
<path d="M557 388L1022 400" stroke="#666" stroke-width=".7"/>

<!-- cabinets left -->
<polygon points="39,411 279,405 545,403 545,450 300,537 39,537" fill="#e8e6dc"/>
<polygon points="280,405 545,403 545,450 280,520" fill="#eceade"/>
<path d="M39 411L279 405L545 402" fill="none" stroke="#666" stroke-width=".7"/>
<path d="M39 418L279 412L545 404" fill="none" stroke="#222" stroke-width="1"/>
<path d="M58 435L243 427L222 537M40 537L58 435" fill="none" stroke="#666" stroke-width="2.200"/>
<path d="M58 435L243 427L222 537M40 537L58 435" fill="none" stroke="#f5f5f0" stroke-width="1"/>
<path d="M63 439L237 431L227 537M44 537L63 439" fill="none" stroke="#333" stroke-width=".7"/>
<path d="M260 413L243 537" stroke="#555" stroke-width="1.500" stroke-dasharray="2 1"/>
<path d="M273 425L385 420V426M272 455L260 537" fill="none" stroke="#666" stroke-width="1.800"/>
<path d="M273 425L385 420M272 455L260 537" stroke="#fff" stroke-width=".7" fill="none"/>
<path d="M397 408L395 418M483 405V416" stroke="#444" stroke-width="1"/>
<path d="M405 418L477 415V420" fill="none" stroke="#666" stroke-width="1.800"/>
<path d="M490 415L538 412V416" fill="none" stroke="#666" stroke-width="1.800"/>
<rect x="548" y="403" width="24" height="13" fill="none" stroke="#777" stroke-width=".8"/>
<!-- cabinets right -->
<polygon points="543,404 1022,423 1022,470 543,425" fill="#f6f4e8"/>
<path d="M572 405L1022 423" stroke="#333" stroke-width=".8"/>
<path d="M545 402V418M577 404V416M623 405V417M685 407V427M688 407V427M865 415V442M870 415V442M1003 427V453M1008 427V453" stroke="#444" stroke-width=".8"/>
<path d="M630 414L675 417V426M630 414V422" fill="none" stroke="#777" stroke-width="1.600"/>
<path d="M698 419L851 430V440M698 419V428" fill="none" stroke="#777" stroke-width="1.600"/>
<path d="M888 432L989 441V452M888 432V442" fill="none" stroke="#777" stroke-width="1.600"/>
<path d="M747 418L785 420" stroke="#111" stroke-width=".8"/><path d="M747 414v7M745 418h8M779 416v7M776 420h9" stroke="#111" stroke-width="1.800"/>
<path d="M553 407H565" stroke="#111" stroke-width=".8"/><path d="M553 405v5M550 407h6M565 405v5M562 407h6" stroke="#111" stroke-width="1.600"/>
<path d="M998 442l-2 7h5zM1018 444l-2 7h5z" fill="#1c1c1c"/>

<!-- pot -->
<polygon points="805,380 855,382 855,402 840,403 812,403" fill="url(#potg)"/>
<ellipse cx="830" cy="381" rx="23" ry="4" fill="#b5301f"/>
<path d="M825 378h10v-3h-10z" fill="#3a2a25"/><rect x="824" y="371" width="13" height="4" rx="2" fill="#222"/>

<!-- left tap and vase -->
<path d="M351 390V370Q352 359 356 359Q364 359 365 372" fill="none" stroke="#c8d0c8" stroke-width="3"/>
<path d="M321 380H336M333 381V391M365 382H380M366 382V392" stroke="#c4ccc4" stroke-width="2.500"/>
<path d="M419 372h16l1 14-2 5h-13l-2-5z" fill="#fdfdfd" stroke="#bbb" stroke-width=".5"/>
<path d="M428 372l-2-13c0-3 4-3 4 0l-1 13z" fill="#1c3e45"/><ellipse cx="429" cy="358" rx="3.500" ry="3.500" fill="#1f7a85"/>
<path d="M432 372l3-14M434 372l4-12" stroke="#444" stroke-width="1"/>
<path d="M419 359c0-6 6-7 9-3" stroke="#d7d7d7" stroke-width="2" fill="none"/>

<!-- island -->
<polygon points="268,432 543,416 720,430 953,449 1022,457 1022,537 647,537" fill="url(#wt)"/>
<polygon points="268,432 647,537 498,537 297,463 267,450" fill="url(#wi)"/>
<path d="M268 432L647 537" stroke="#6b4a32" stroke-width=".7"/>
<polygon points="297,463 288,537 498,537" fill="#12365a"/>
<g stroke="#0a2138" stroke-width="1" fill="none"><path d="M305 475L298 537M313 507L367 537M305 475L430 537"/></g>

<!-- sink -->
<path d="M583 430Q600 425 620 426L700 432L721 437Q680 442 650 441Q610 440 583 430Z" fill="#dcdcdc" stroke="#555" stroke-width=".6"/>
<path d="M600 432c30-4 70-2 100 3" stroke="#f5f5f5" stroke-width="2" fill="none"/>

<!-- faucet -->
<path d="M606 412V345Q606 326 618 326Q627 326 630 340" fill="none" stroke="url(#tap)" stroke-width="6"/>
<path d="M629 339L635 365" stroke="#6e6e6e" stroke-width="5"/><path d="M635 365L636 376" stroke="#e8e8e8" stroke-width="4"/>
<path d="M583 408l8-1h24l5 2 1 8-3 5h-21l-14-6z" fill="#ececec" stroke="#aaa" stroke-width=".6"/>
<rect x="600" y="415" width="13" height="21" fill="#f4f4f4"/><ellipse cx="606.500" cy="436" rx="9" ry="2.500" fill="#dcdcdc"/>

<!-- cooktop -->
<polygon points="733,444 751,436 950,448 961,462 898,458" fill="#4a3c30" stroke="#1e150e" stroke-width=".7"/>
<polygon points="737,444 898,459 898,464 737,449" fill="#c9a585"/>
<polygon points="726,428 780,436 937,455 937,458 773,438 726,432" fill="#23282a"/>
<path d="M775 437L935 456" stroke="#6e7072" stroke-width="1" stroke-dasharray="2 1"/>
<rect x="920" y="450" width="12" height="5" fill="#333" stroke="#222" stroke-width=".5"/><rect x="922" y="451" width="8" height="3" fill="#c49a74"/>
<polygon points="898,458 1022,467 1022,525 898,467" fill="#5e6466" stroke="#ddd" stroke-width=".7"/>
<path d="M906 460L1022 507" stroke="#333" stroke-width=".7"/>
</g>
<rect x="1022" y="68" width="2" height="470" fill="#c9c9c9"/>

<!-- status bar -->
<rect y="537" width="1024" height="16" fill="#f0f0f0"/>
<rect y="552" width="1024" height="1" fill="#8c8c8c"/>
<circle cx="7.500" cy="545.500" r="3.800" fill="#ccc" stroke="#aaa"/><rect x="6.500" y="543" width="2" height="5" fill="#888"/>
<circle cx="23" cy="545.500" r="3.800" fill="#ddd" stroke="#999"/><rect x="22.300" y="544" width="1.500" height="4" fill="#777"/>
<rect x="33" y="542" width="1" height="7" fill="#aaa"/>
<text x="39" y="549" font-size="8.300" textLength="209" lengthAdjust="spacingAndGlyphs">Select objects. Shift to extend select. Drag mouse to select multiple.</text>
<rect x="848" y="542" width="1" height="7" fill="#aaa"/>
<text x="855" y="549" font-size="8.300" textLength="45" lengthAdjust="spacingAndGlyphs">Measurements</text>
<rect x="905.500" y="540.500" width="106" height="11" fill="#f0f0f0" stroke="#c3ccd6"/>
</svg>
</body></html>
